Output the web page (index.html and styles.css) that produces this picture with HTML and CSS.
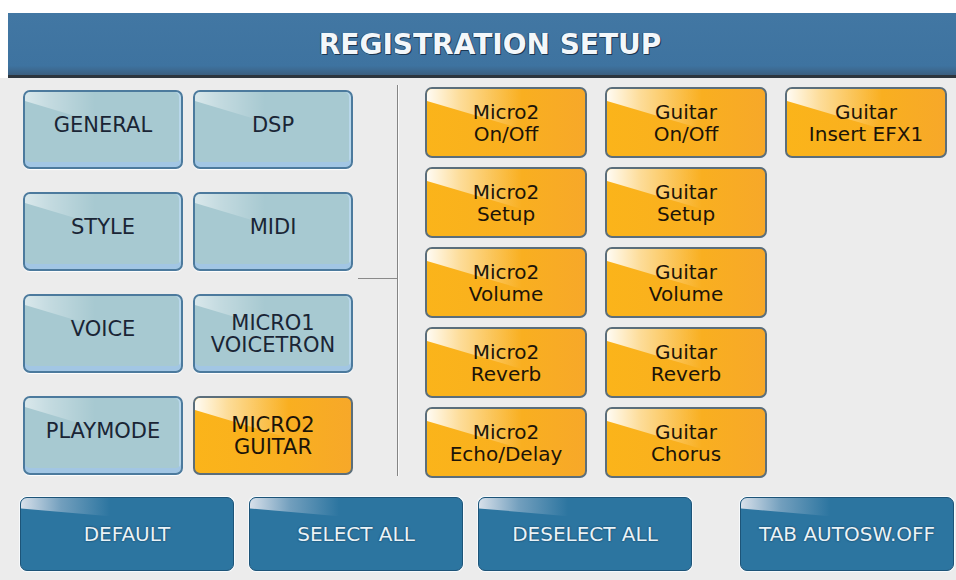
FILE: index.html
```
<!DOCTYPE html>
<html lang="en">
  <head>
    <meta charset="UTF-8" />
    <meta name="viewport" content="width=device-width, initial-scale=1.0" />
    <title>Registration Setup</title>
    <link rel="stylesheet" href="styles.css">
  </head>
  <body>
    <header class="titlebar">
      <h1>REGISTRATION SETUP</h1>
    </header>

    <div class="screen">
      <div class="panel">
        <!-- Section tabs -->
        <div class="tabs">
          <div class="key tab"><span>GENERAL</span></div>
          <div class="key tab"><span>DSP</span></div>
          <div class="key tab"><span>STYLE</span></div>
          <div class="key tab"><span>MIDI</span></div>
          <div class="key tab"><span>VOICE</span></div>
          <div class="key tab two"><span>MICRO1<br />VOICETRON</span></div>
          <div class="key tab"><span>PLAYMODE</span></div>
          <div class="key tab two on"><span>MICRO2<br />GUITAR</span></div>
        </div>

        <div class="divider"><span class="tick"></span></div>

        <!-- Parameters of the selected section -->
        <div class="params">
          <div class="key on"><span>Micro2<br />On/Off</span></div>
          <div class="key on"><span>Micro2<br />Setup</span></div>
          <div class="key on"><span>Micro2<br />Volume</span></div>
          <div class="key on"><span>Micro2<br />Reverb</span></div>
          <div class="key on"><span>Micro2<br />Echo/Delay</span></div>
          <div class="key on"><span>Guitar<br />On/Off</span></div>
          <div class="key on"><span>Guitar<br />Setup</span></div>
          <div class="key on"><span>Guitar<br />Volume</span></div>
          <div class="key on"><span>Guitar<br />Reverb</span></div>
          <div class="key on"><span>Guitar<br />Chorus</span></div>
          <div class="key on"><span>Guitar<br />Insert EFX1</span></div>
        </div>
      </div>

      <!-- Bottom actions -->
      <div class="actions">
        <div class="key act"><span>DEFAULT</span></div>
        <div class="key act"><span>SELECT ALL</span></div>
        <div class="key act"><span>DESELECT ALL</span></div>
        <div class="key act last"><span>TAB AUTOSW.OFF</span></div>
      </div>
    </div>
  </body>
</html>
```

FILE: styles.css
```
body {
  margin: 0;
  background-color: #fff;
  font-family: "DejaVu Sans", Verdana, sans-serif;
}
.titlebar {
  margin: 13px 0 0 8px;
  height: 62px;
  background: linear-gradient(#4277a3, #3e73a0 85%, #3b5f80);
  border-bottom: 3px solid #2d353d;
  display: flex;
  align-items: center;
  justify-content: center;
  padding-left: 16px;
}
h1 {
  margin: 0;
  font-size: 28px;
  font-weight: bold;
  color: #f3f7fa;
  text-shadow: 1px 1px 0 #1b3651, -1px 0 0 #29496a;
}
.screen {
  background-color: #ececec;
  height: 502px;
}
.panel {
  display: flex;
}
.tabs {
  display: grid;
  grid-template-columns: 160px 160px;
  grid-auto-rows: 79px;
  gap: 23px 10px;
  padding: 12px 0 0 23px;
}
.divider {
  width: 39px;
  height: 391px;
  margin: 7px 0 0 5px;
  border-right: 1px solid #858585;
  box-shadow: 1px 0 0 #fafafa;
}
.tick {
  display: block;
  height: 193px;
  border-bottom: 1px solid #8a8a8a;
}
.params {
  display: grid;
  grid-template-rows: repeat(5, 71px);
  grid-auto-flow: column;
  grid-auto-columns: 162px;
  gap: 9px 18px;
  padding: 9px 0 0 27px;
}

/* shared key look */
.key {
  position: relative;
  display: flex;
  align-items: center;
  justify-content: center;
  text-align: center;
  box-sizing: border-box;
  border-radius: 7px;
  overflow: hidden;
  font-size: 20px;
  line-height: 22px;
}
.key span {
  position: relative;
  z-index: 1;
}
.key::before {
  content: "";
  position: absolute;
  left: 0;
  top: 0;
  width: 60%;
  height: 40px;
  background: linear-gradient(to right, rgba(255, 255, 255, 0.95), rgba(255, 255, 255, 0.55) 35%, rgba(255, 255, 255, 0));
  clip-path: polygon(0 0, 100% 0, 100% 100%, 0 30%);
}

.tab {
  background-color: #a7c9d1;
  border: 2px solid #4c7a9d;
  box-shadow: inset 0 -5px 0 #a2c6e4, inset -2px 0 0 #b8d7ea, 0 1px 1px #fff;
  color: #1a2535;
  font-size: 21px;
  padding-bottom: 10px;
}
.tab::before {
  width: 45%;
  height: 30px;
  opacity: 0.6;
}
.tab.two {
  padding-bottom: 0;
}
.on {
  background: linear-gradient(to right, #fbb41a, #f9af20 60%, #f7a829);
  border: 2px solid #5b6e7b;
  box-shadow: none;
  color: #1c1408;
}
.on.tab::before {
  width: 60%;
  height: 40px;
  opacity: 1;
}

.actions {
  display: flex;
  gap: 15px;
  margin-top: 19px;
  padding: 0 2px 0 20px;
}
.act {
  width: 214px;
  height: 74px;
  background-color: #2c75a0;
  border: 1px solid #1d5478;
  box-shadow: 0 0 0 1px #f6f9fb;
  color: #eaf3f8;
  font-size: 20px;
  text-shadow: 0 0 2px #0b3350;
}
.act::before {
  width: 42%;
  height: 26px;
  background: linear-gradient(to right, rgba(225, 230, 238, 0.95), rgba(200, 210, 225, 0.45) 45%, rgba(200, 210, 225, 0));
  clip-path: polygon(0 0, 100% 0, 100% 70%, 0 40%);
}
.last {
  margin-left: auto;
}
```
